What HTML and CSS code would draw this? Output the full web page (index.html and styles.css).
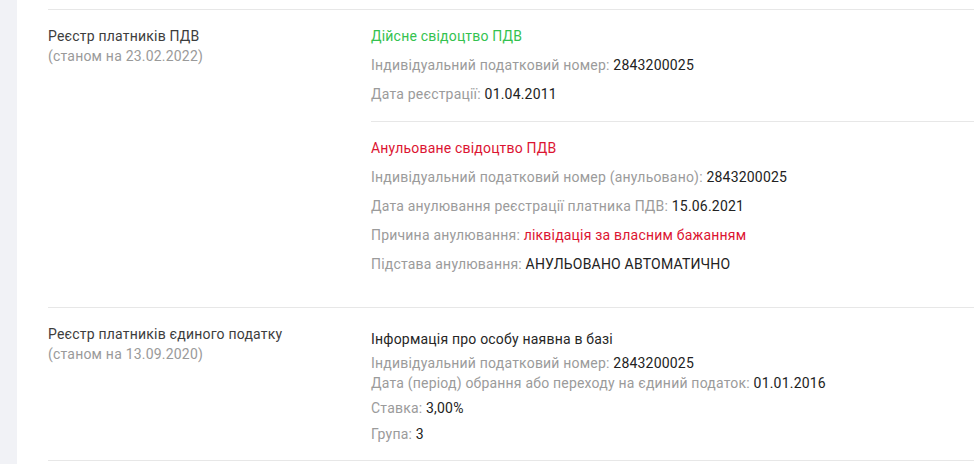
FILE: index.html
```html
<!DOCTYPE html>
<html lang="uk">
<head>
<meta charset="utf-8">
<title>Реєстри</title>
<link rel="stylesheet" href="styles.css">
</head>
<body>
<div class="page">
  <aside class="strip"></aside>
  <main class="content">
    <section class="row">
      <div class="label">
        <div class="label-title">Реєстр платників ПДВ</div>
        <div class="label-date">(станом на 23.02.2022)</div>
      </div>
      <div class="info">
        <div class="block">
          <div class="item title-ok">Дійсне свідоцтво ПДВ</div>
          <div class="item"><span class="key">Індивідуальний податковий номер:</span> <span class="val">2843200025</span></div>
          <div class="item"><span class="key">Дата реєстрації:</span> <span class="val">01.04.2011</span></div>
        </div>
        <div class="block block-sep">
          <div class="item title-bad">Анульоване свідоцтво ПДВ</div>
          <div class="item"><span class="key">Індивідуальний податковий номер (анульовано):</span> <span class="val">2843200025</span></div>
          <div class="item"><span class="key">Дата анулювання реєстрації платника ПДВ:</span> <span class="val">15.06.2021</span></div>
          <div class="item"><span class="key">Причина анулювання:</span> <span class="val-bad">ліквідація за власним бажанням</span></div>
          <div class="item"><span class="key">Підстава анулювання:</span> <span class="val">АНУЛЬОВАНО АВТОМАТИЧНО</span></div>
        </div>
      </div>
    </section>
    <section class="row">
      <div class="label">
        <div class="label-title">Реєстр платників єдиного податку</div>
        <div class="label-date">(станом на 13.09.2020)</div>
      </div>
      <div class="info info-single">
        <div class="line line-title">Інформація про особу наявна в базі</div>
        <div class="line"><span class="key">Індивідуальний податковий номер:</span> <span class="val">2843200025</span></div>
        <div class="line"><span class="key">Дата (період) обрання або переходу на єдиний податок:</span> <span class="val">01.01.2016</span></div>
        <div class="line line-gap5"><span class="key">Ставка:</span> <span class="val">3,00%</span></div>
        <div class="line line-gap6"><span class="key">Група:</span> <span class="val">3</span></div>
      </div>
    </section>
  </main>
</div>
</body>
</html>
```

FILE: styles.css
```css
* { box-sizing: border-box; }
html, body { margin: 0; padding: 0; background: #ffffff; }
body {
  font-family: Roboto, "Liberation Sans", Arial, sans-serif;
  font-size: 14px;
  line-height: 20px;
  letter-spacing: 0.2px;
  color: #333333;
}
.page {
  display: flex;
  min-height: 464px;
}
.strip {
  width: 17px;
  flex: 0 0 17px;
  background: #f1f2f6;
}
.content {
  flex: 1;
  padding: 9px 0 0 31px;
}
.row {
  display: grid;
  grid-template-columns: 323px 1fr;
  border-top: 1px solid #e7e7e7;
  padding: 16px 0;
}
.row:last-child { border-bottom: 1px solid #e7e7e7; }
.label-title { color: #3d3d3d; }
.label-date { color: #9a9a9a; }
.block { padding-bottom: 8px; }
.block-sep {
  border-top: 1px solid #e7e7e7;
  padding-top: 16px;
}
.item { margin-bottom: 9px; }
.title-ok { color: #34c24f; }
.title-bad { color: #dc1432; }
.key { color: #9b9b9b; }
.val { color: #222222; }
.val-bad { color: #dc1432; }
.info-single { padding-top: 5px; }
.line-title { color: #262626; margin-bottom: 4px; }
.line-gap5 { margin-top: 5px; }
.line-gap6 { margin-top: 6px; }
```
